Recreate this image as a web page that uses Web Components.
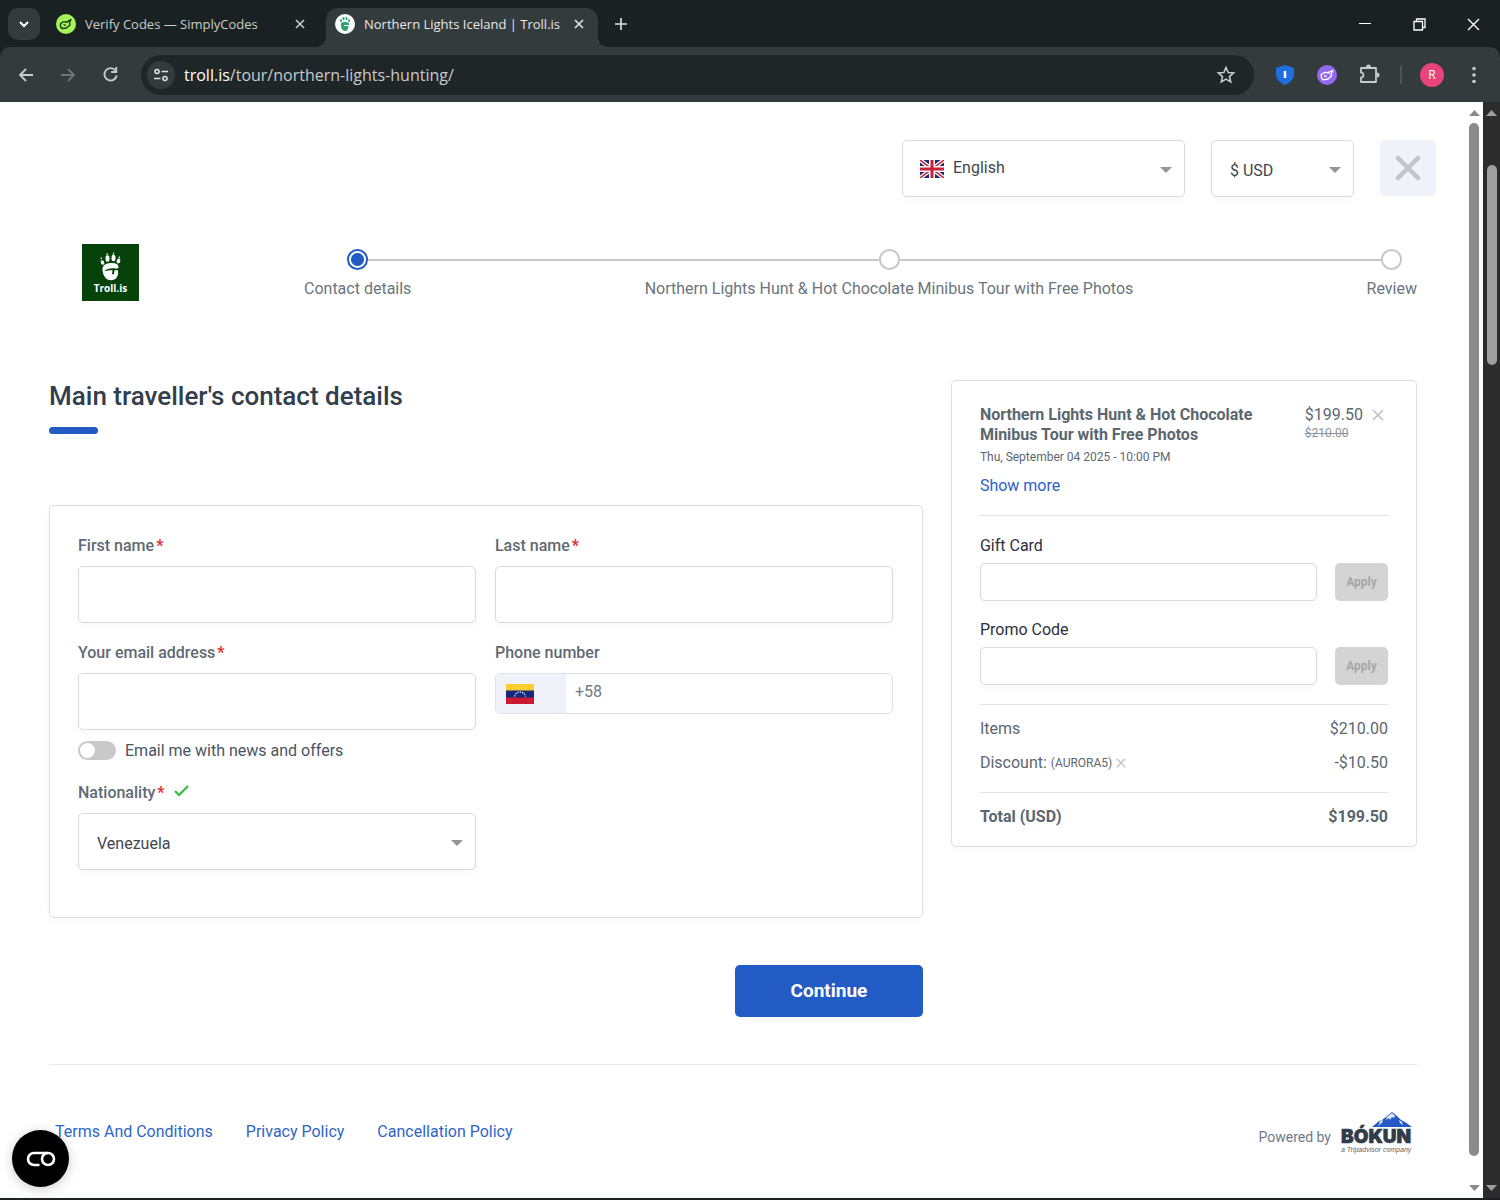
<!DOCTYPE html>
<html lang="en">
<head>
<meta charset="utf-8">
<title>Northern Lights Iceland | Troll.is</title>
<style>
  body {
    margin: 0;
    font-family: Roboto, "Liberation Sans", sans-serif;
    font-size: 16px;
    line-height: 20px;
    color: #5b6770;
    background: #000;
  }
</style>
</head>
<body>
<browser-window>
  <browser-tab slot="tabs" label="Verify Codes — SimplyCodes">
    <svg width="20" height="20" viewBox="0 0 20 20">
      <circle cx="10" cy="10" r="10" fill="#a6f45c"/>
      <path d="M4.500 9.500l3-1.700 3 .2 4.500-2.500-1.500 3 .5 2.500-3.500 3-4.500.500-1.500-2z M7.500 10.500l2.500 1 M10.500 8l2-.5" fill="none" stroke="#14300c" stroke-width="1.300" stroke-linejoin="round"/>
    </svg>
  </browser-tab>
  <browser-tab slot="tabs" label="Northern Lights Iceland | Troll.is" active>
    <svg width="20" height="20" viewBox="0 0 20 20">
      <circle cx="10" cy="10" r="10" fill="#fff"/>
      <g fill="#2ea36f">
        <ellipse cx="6" cy="6.500" rx="1" ry="1.500"/><ellipse cx="8.500" cy="4.500" rx="1" ry="1.800"/>
        <ellipse cx="11.500" cy="4.500" rx="1" ry="1.800"/><ellipse cx="14" cy="6.500" rx="1" ry="1.500"/>
        <path d="M6 9c2-1.500 6-1.500 8 0v2H9v1h4.500c0 3-1.500 5-3.500 5s-4-2.500-4-5z"/>
      </g>
    </svg>
  </browser-tab>

  <booking-page>
    <select-box slot="tools" class="language" label="Language" value="English">
      <svg slot="icon" width="24" height="18" viewBox="0 0 24 18">
        <path fill="#1d2a6b" d="M0 0h24v18H0z"/>
        <path d="M0 0l24 18M24 0L0 18" stroke="#fff" stroke-width="4"/>
        <path d="M0 0l24 18M24 0L0 18" stroke="#c8203c" stroke-width="1.500"/>
        <path d="M12 0v18M0 9h24" stroke="#fff" stroke-width="6"/>
        <path d="M12 0v18M0 9h24" stroke="#c8203c" stroke-width="3"/>
      </svg>
    </select-box>
    <select-box slot="tools" class="currency" label="Currency" value="$ USD"></select-box>

    <step-list slot="steps" current="0" steps="Contact details;Northern Lights Hunt &amp; Hot Chocolate Minibus Tour with Free Photos;Review"></step-list>

    <contact-form slot="form" heading="Main traveller's contact details">
      <text-field label="First name" required></text-field>
      <text-field label="Last name" required></text-field>
      <text-field label="Your email address" type="email" required></text-field>
      <phone-field label="Phone number" code="+58"></phone-field>
      <toggle-switch label="Email me with news and offers"></toggle-switch>
      <select-box label="Nationality" value="Venezuela" caption required valid></select-box>
    </contact-form>

    <cart-summary slot="cart">
      <span slot="title">Northern Lights Hunt &amp; Hot Chocolate Minibus Tour with Free Photos</span>
      <span slot="date">Thu, September 04 2025 - 10:00 PM</span>
      <code-field slot="codes" label="Gift Card"></code-field>
      <code-field slot="codes" label="Promo Code"></code-field>
    </cart-summary>

    <page-footer slot="footer">
      <a href="#terms">Terms And Conditions</a>
      <a href="#privacy">Privacy Policy</a>
      <a href="#cancellation">Cancellation Policy</a>
    </page-footer>
  </booking-page>

  <scroll-bar slot="bars" before="0" thumb="98" after="2"></scroll-bar>
  <scroll-bar slot="bars" before="4" thumb="19" after="77" dark></scroll-bar>
</browser-window>

<script>
const BASE = `
  :host, *, *::before, *::after { box-sizing: border-box; }
  svg { display: block; flex: none; }
  button { border: 0; padding: 0; background: none; font: inherit; color: inherit; cursor: pointer; }
  input, select { font: inherit; color: inherit; margin: 0; min-width: 0; }
  a { text-decoration: none; }
`;

class BaseElement extends HTMLElement {
  constructor() {
    super();
    this.attachShadow({ mode: 'open' });
  }

  connectedCallback() {
    this.shadowRoot.innerHTML = `<style>${BASE}${this.styles()}</style>${this.render()}`;
  }

  attr(name) {
    return (this.getAttribute(name) || '').replace(/&/g, '&amp;');
  }
}

// ---------- Browser ----------

class BrowserWindow extends BaseElement {
  styles() {
    return `
      :host {
        display: flex;
        flex-direction: column;
        min-height: 100vh;
        background: #1a2122;
        font-family: "Open Sans", "Noto Sans", sans-serif;
      }
      .strip { display: flex; height: 47px; padding: 8px 0 0 8px; color: #dfe3e3; }
      .strip button { display: grid; place-items: center; }
      .search { width: 32px; height: 32px; border-radius: 10px; background: #343b3d; }
      .tabs { display: flex; }
      .new { width: 46px; height: 32px; }
      .controls { display: flex; margin-left: auto; }
      .controls button { width: 54px; height: 32px; }
      .toolbar {
        display: flex;
        align-items: center;
        height: 55px;
        padding: 0 12px;
        border-radius: 10px 10px 0 0;
        background: #343b3d;
        color: #c7cbcb;
      }
      .toolbar button { display: grid; place-items: center; flex: none; }
      .nav { width: 28px; height: 28px; margin-right: 14px; }
      .reload { margin-right: 17px; }
      .address {
        flex: 1;
        display: flex;
        align-items: center;
        height: 40px;
        margin-right: 17px;
        padding: 0 18px 0 6px;
        border-radius: 20px;
        background: #1f2628;
      }
      .site { width: 28px; height: 28px; border-radius: 50%; background: #343b3d; margin-right: 9px; }
      .url { flex: 1; font-size: 16px; white-space: nowrap; }
      .url b { font-weight: 400; color: #fff; }
      .ext { width: 28px; height: 28px; margin-right: 14px; }
      .puzzle { margin-right: 17px; }
      .rule { width: 2px; height: 18px; margin-right: 18px; background: #4b5456; }
      .avatar { width: 24px; height: 24px; border-radius: 50%; background: #e8437a; color: #fff; font-size: 12px; margin-right: 16px; }
      .more { width: 28px; height: 28px; }
      .view { flex: 1; display: flex; margin-bottom: 2px; background: #fff; font-family: Roboto, "Liberation Sans", sans-serif; }
      .view slot:not([name])::slotted(*) { flex: 1; min-width: 0; }
    `;
  }

  render() {
    return `
      <div class="strip">
        <button class="search" aria-label="Search tabs">
          <svg width="12" height="8" viewBox="0 0 12 8"><path d="M2 2l4 4 4-4" fill="none" stroke="#fff" stroke-width="2"/></svg>
        </button>
        <div class="tabs"><slot name="tabs"></slot></div>
        <button class="new" aria-label="New tab">
          <svg width="14" height="14" viewBox="0 0 14 14"><path d="M7 1v12M1 7h12" stroke="currentColor" stroke-width="1.600"/></svg>
        </button>
        <div class="controls">
          <button aria-label="Minimize"><svg width="12" height="12" viewBox="0 0 12 12"><path d="M0 5.500h12" stroke="#fff"/></svg></button>
          <button aria-label="Restore">
            <svg width="13" height="13" viewBox="0 0 13 13"><path d="M1 3.500h8.500V12H1z M3.500 3.500V1H12v8.500H9.500" fill="none" stroke="#fff" stroke-width="1.300"/></svg>
          </button>
          <button aria-label="Close"><svg width="13" height="13" viewBox="0 0 13 13"><path d="M1 1l11 11M12 1L1 12" stroke="#fff" stroke-width="1.400"/></svg></button>
        </div>
      </div>
      <div class="toolbar">
        <button class="nav" aria-label="Back">
          <svg width="16" height="16" viewBox="0 0 16 16"><path d="M15 8H2M8 2L2 8l6 6" fill="none" stroke="currentColor" stroke-width="1.800"/></svg>
        </button>
        <button class="nav" aria-label="Forward">
          <svg width="16" height="16" viewBox="0 0 16 16"><path d="M1 8h13M8 2l6 6-6 6" fill="none" stroke="#6d7475" stroke-width="1.800"/></svg>
        </button>
        <button class="nav reload" aria-label="Reload">
          <svg width="17" height="17" viewBox="0 0 17 17"><path d="M13.500 4.500A6.200 6.200 0 1 0 14.700 9.500" fill="none" stroke="currentColor" stroke-width="1.900"/><path d="M14.200 1v5H9.200" fill="none" stroke="currentColor" stroke-width="1.900"/></svg>
        </button>
        <div class="address">
          <button class="site" aria-label="Site information">
            <svg width="16" height="16" viewBox="0 0 16 16" fill="none" stroke="#dfe3e3" stroke-width="1.600"><circle cx="4" cy="4.500" r="2"/><path d="M8.500 4.500H15M1 11.500h6.500"/><circle cx="12" cy="11.500" r="2"/></svg>
          </button>
          <span class="url"><b>troll.is</b>/tour/northern-lights-hunting/</span>
          <button aria-label="Bookmark">
            <svg width="20" height="20" viewBox="0 0 20 20"><path d="M10 2.500l2.200 5 5.400.5-4.100 3.600 1.200 5.300L10 14.100l-4.700 2.800 1.200-5.300L2.400 8l5.400-.5z" fill="none" stroke="currentColor" stroke-width="1.600"/></svg>
          </button>
        </div>
        <button class="ext" aria-label="Shield extension">
          <svg width="18" height="20" viewBox="0 0 18 20"><path d="M9 0l9 3v6c0 5-3.500 8.500-9 11-5.500-2.500-9-6-9-11V3z" fill="#1f6fe0"/><path d="M9 6v7" stroke="#fff" stroke-width="2.500"/></svg>
        </button>
        <button class="ext" aria-label="Coupon extension">
          <svg width="20" height="20" viewBox="0 0 20 20"><circle cx="10" cy="10" r="10" fill="#9468f0"/><path d="M4 9.500l3.500-2 3 .2 5.500-2.200-2 3.500.5 2-3.500 3-5 .8-1.500-2z M7 10.500l2.500 1.200 M10.500 8l2.500-.5" fill="none" stroke="#fff" stroke-width="1.300" stroke-linejoin="round"/></svg>
        </button>
        <button class="ext puzzle" aria-label="Extensions">
          <svg width="22" height="22" viewBox="0 0 22 22"><path d="M3 4h15v14H3v-4.500c3 0 3.500-5 0-5z" fill="none" stroke="currentColor" stroke-width="1.800" stroke-linejoin="round"/><path d="M8 3a2.500 2.500 0 0 1 5 0zM19 8.500a2.500 2.500 0 0 1 0 5z" fill="currentColor"/></svg>
        </button>
        <span class="rule"></span>
        <button class="avatar" aria-label="Profile">R</button>
        <button class="more" aria-label="Menu">
          <svg width="4" height="18" viewBox="0 0 4 18" fill="currentColor"><circle cx="2" cy="2.500" r="1.800"/><circle cx="2" cy="9" r="1.800"/><circle cx="2" cy="15.500" r="1.800"/></svg>
        </button>
      </div>
      <div class="view">
        <slot></slot>
        <slot name="bars"></slot>
      </div>
    `;
  }
}

class BrowserTab extends BaseElement {
  styles() {
    return `
      :host {
        display: flex;
        align-items: flex-start;
        position: relative;
        width: 276px;
        height: 39px;
        padding: 6px 6px 0 16px;
        font-size: 13px;
        color: #c9cdcd;
      }
      :host([active]) {
        width: 272px;
        margin-left: 10px;
        padding: 6px 9px 0;
        border-radius: 12px 12px 0 0;
        background: #343b3d;
        color: #e6e8e8;
      }
      /* the flared feet of the selected tab */
      :host([active])::before, :host([active])::after {
        content: "";
        position: absolute;
        bottom: 0;
        width: 10px;
        height: 10px;
      }
      :host([active])::before { left: -10px; background: radial-gradient(circle at 0 0, transparent 10px, #343b3d 10px); }
      :host([active])::after { right: -10px; background: radial-gradient(circle at 100% 0, transparent 10px, #343b3d 10px); }
      span { flex: 1; margin-left: 9px; white-space: nowrap; }
      button { display: grid; place-items: center; width: 20px; height: 20px; }
    `;
  }

  render() {
    return `
      <slot></slot><span>${this.attr('label')}</span>
      <button aria-label="Close tab"><svg width="10" height="10" viewBox="0 0 10 10"><path d="M1 1l8 8M9 1L1 9" stroke="currentColor" stroke-width="1.600"/></svg></button>
    `;
  }
}

class ScrollBar extends BaseElement {
  styles() {
    return `
      :host { display: flex; flex-direction: column; align-items: center; width: 15px; padding-right: 3px; color: #8b8b8b; }
      :host([dark]) { width: 17px; padding: 0; background: #2c2c2c; color: #9f9f9f; }
      .arrow { display: grid; place-items: center; height: 21px; }
      .thumb { width: 10px; border-radius: 5px; background: currentColor; }
    `;
  }

  render() {
    const part = (name, cls = '') => `<div class="${cls}" style="flex:${this.attr(name)}"></div>`;
    return `
      <div class="arrow"><svg width="11" height="6" viewBox="0 0 11 6"><path d="M0 6l5.500-6L11 6z" fill="currentColor"/></svg></div>
      ${part('before')}${part('thumb', 'thumb')}${part('after')}
      <div class="arrow"><svg width="11" height="6" viewBox="0 0 11 6"><path d="M0 0l5.500 6L11 0z" fill="currentColor"/></svg></div>
    `;
  }
}

// ---------- Booking page ----------

class BookingPage extends BaseElement {
  styles() {
    return `
      :host { display: block; padding: 38px 51px 0 49px; }
      .tools { display: flex; justify-content: flex-end; gap: 26px; margin-right: -19px; }
      slot[name=tools]::slotted(.language) { width: 283px; --pad: 0 0 2px 50px; }
      slot[name=tools]::slotted(.currency) { width: 143px; }
      .close { display: grid; place-items: center; width: 56px; height: 56px; border-radius: 5px; background: #eff3f9; }
      header { display: flex; align-items: flex-start; gap: 165px; margin-top: 47px; padding-left: 33px; }
      header slot::slotted(*) { flex: 1; }
      .columns {
        display: grid;
        grid-template-columns: minmax(0, 15fr) minmax(0, 8fr);
        align-items: start;
        gap: 28px;
        margin-top: 79px;
      }
      .consent {
        position: fixed;
        left: 12px;
        bottom: 13px;
        display: grid;
        place-items: center;
        width: 57px;
        height: 57px;
        border-radius: 50%;
        background: #000;
        box-shadow: 0 2px 12px #0003;
      }
    `;
  }

  render() {
    return `
      <div class="tools">
        <slot name="tools"></slot>
        <button class="close" aria-label="Close">
          <svg width="26" height="26" viewBox="0 0 26 26"><path d="M3 3l20 20M23 3L3 23" stroke="#c3c4c6" stroke-width="4.500" stroke-linecap="round"/></svg>
        </button>
      </div>
      <header>
        <svg width="57" height="57" viewBox="0 0 57 57" role="img">
          <path fill="#06430b" d="M0 0h57v57H0z"/>
          <g fill="#fff">
            <ellipse cx="20.500" cy="18.500" rx="1.700" ry="2.300" transform="rotate(-20 20.500 18.500)"/>
            <ellipse cx="25.500" cy="14.500" rx="2" ry="3.200"/>
            <ellipse cx="31.500" cy="14" rx="2" ry="3.200"/>
            <ellipse cx="36.500" cy="17" rx="1.800" ry="2.500" transform="rotate(20 36.500 17)"/>
            <path d="M19 12.500l1 2.500-1.500.3zM25 8.500l1 2.500h-1.700zM31.500 8l.8 2.500h-1.700zM37.500 11.500l.3 3-1.500-.4z"/>
            <path d="M20.500 25c0-4 4-6 9-6 4 0 7 1 7 4 0 2-2 1.500-4 1.300-4-.3-8 .2-10 3l5-1h3l-.5 4h2l.5-4h3.500c1 6-2 10-7 10s-8.500-5-8.500-11.300z"/>
          </g>
          <text x="28.500" y="48" text-anchor="middle" font-family="Open Sans, sans-serif" font-weight="700" font-size="10" fill="#fff">Troll.is</text>
        </svg>
        <slot name="steps"></slot>
      </header>
      <div class="columns">
        <slot name="form"></slot>
        <slot name="cart"></slot>
      </div>
      <slot name="footer"></slot>
      <button class="consent" aria-label="Cookie settings">
        <svg width="30" height="16" viewBox="0 0 30 16" fill="none" stroke="#fff" stroke-width="2.600"><path d="M13.500 14H8A6 6 0 0 1 8 2h14"/><circle cx="22" cy="8" r="6"/></svg>
      </button>
    `;
  }
}

class StepList extends BaseElement {
  styles() {
    return `
      :host { display: grid; padding-top: 5px; gap: 9px 0; color: #6b757d; }
      .marker { display: flex; align-items: center; grid-row: 1; }
      .marker::before, .marker::after, .line { content: ""; flex: 1; height: 2px; background: #c6c7c8; }
      .marker.first::before, .marker.last::after { background: none; }
      .line { grid-row: 1; align-self: center; }
      .dot { width: 21px; height: 21px; border: 2px solid #c6c7c8; border-radius: 50%; }
      .on .dot { border-color: #235bc4; background: radial-gradient(circle, #235bc4 6px, #fff 7px); }
      .label { grid-row: 2; white-space: nowrap; }
    `;
  }

  render() {
    const steps = this.getAttribute('steps').split(';');
    const current = Number(this.getAttribute('current'));
    this.style.gridTemplateColumns = steps.map(() => 'auto').join(' 1fr ');
    return steps.map((text, i) => {
      const col = i * 2 + 1;
      const cls = [i === 0 && 'first', i === steps.length - 1 && 'last', i === current && 'on'].filter(Boolean).join(' ');
      return `
        ${i ? `<div class="line" style="grid-column:${col - 1}"></div>` : ''}
        <div class="marker ${cls}" style="grid-column:${col}"><span class="dot"></span></div>
        <div class="label" style="grid-column:${col}">${text.replace('&', '&amp;')}</div>
      `;
    }).join('');
  }
}

class ContactForm extends BaseElement {
  styles() {
    return `
      :host { display: block; }
      h1 { margin: 0; font-size: 26px; line-height: 32px; font-weight: 500; color: #323e4b; }
      .bar { width: 49px; height: 7px; margin: 15px 0 71px; border-radius: 4px; background: #235bc4; }
      .card {
        display: grid;
        grid-template-columns: 1fr 1fr;
        gap: 0 19px;
        padding: 30px 29px 47px 28px;
        border: 1px solid #dcdddf;
        border-radius: 5px;
        box-shadow: 0 2px 10px #00000008;
      }
      ::slotted(*) { margin-bottom: 20px; }
      ::slotted(text-field[type=email]) { margin-bottom: 11px; }
      ::slotted(toggle-switch) { grid-column: 1 / -1; margin-bottom: 23px; }
      ::slotted(select-box) { margin-bottom: 0; }
      .submit {
        display: block;
        width: 188px;
        height: 52px;
        margin: 47px 0 0 auto;
        border-radius: 5px;
        background: #235bc4;
        color: #fff;
        font-size: 19px;
        font-weight: 700;
      }
    `;
  }

  render() {
    return `
      <h1>${this.attr('heading')}</h1>
      <div class="bar"></div>
      <div class="card"><slot></slot></div>
      <button class="submit">Continue</button>
    `;
  }
}

const LABEL = `
  label { display: flex; align-items: center; height: 20px; margin-bottom: 10px; font-weight: 500; color: #5f6a74; }
  label i { margin-left: 2px; font-style: normal; font-weight: 700; color: #e62e2e; }
  label svg { margin: 0 0 4px 9px; }
`;

const BOX = `
  border: 1px solid #d8dadc;
  border-radius: 5px;
  background: #fff;
  box-shadow: 0 3px 8px #00000008;
`;

class TextField extends BaseElement {
  styles() {
    return `
      :host { display: block; }
      ${LABEL}
      input { display: block; width: 100%; height: 57px; padding: 0 18px; ${BOX} }
    `;
  }

  render() {
    return `
      <label for="f">${this.attr('label')}${this.hasAttribute('required') ? '<i>*</i>' : ''}</label>
      <input id="f" type="${this.attr('type') || 'text'}">
    `;
  }
}

class PhoneField extends BaseElement {
  styles() {
    return `
      :host { display: block; }
      ${LABEL}
      .row { display: flex; height: 41px; overflow: hidden; border: 1px solid #dde1ea; border-radius: 5px; }
      button { width: 70px; padding-left: 10px; background: #eff2f9; }
      input { flex: 1; padding: 0 9px 3px; border: 0; background: none; }
      input::placeholder { color: #6f7b8a; opacity: 1; }
    `;
  }

  render() {
    return `
      <label for="f">${this.attr('label')}</label>
      <div class="row">
        <button aria-label="Country code">
          <svg width="28" height="20" viewBox="0 0 28 20">
            <path fill="#fdce30" d="M0 0h28v7H0z"/><path fill="#12277d" d="M0 6.500h28V14H0z"/><path fill="#cc1a33" d="M0 13.500h28V20H0z"/>
            <path d="M8.500 12.500C10 6.500 18 6.500 19.500 12.500" fill="none" stroke="#fff" stroke-width="1.200" stroke-dasharray="1.300 1.100"/>
          </svg>
        </button>
        <input id="f" type="tel" placeholder="${this.attr('code')}">
      </div>
    `;
  }
}

class ToggleSwitch extends BaseElement {
  styles() {
    return `
      :host { display: block; }
      label { display: flex; align-items: center; gap: 9px; height: 19px; color: #4a5562; }
      input { appearance: none; width: 38px; height: 19px; padding: 2px; border-radius: 10px; background: #c9c9c9; }
      input::before { content: ""; display: block; width: 15px; height: 15px; border-radius: 50%; background: #fff; }
      input:checked { background: #235bc4; }
      input:checked::before { margin-left: auto; }
    `;
  }

  render() {
    return `<label><input type="checkbox" role="switch">${this.attr('label')}</label>`;
  }
}

class SelectBox extends BaseElement {
  styles() {
    return `
      :host { display: block; }
      ${LABEL}
      .box { display: grid; align-items: center; height: 57px; ${BOX} }
      .box > *, ::slotted(svg) { grid-area: 1 / 1; }
      select {
        appearance: none;
        width: 100%;
        height: 100%;
        padding: var(--pad, 4px 0 0 18px);
        border: 0;
        background: none;
        color: #3f464d;
      }
      ::slotted(svg) { margin-left: 17px; pointer-events: none; }
      .caret { justify-self: end; margin-right: 12px; margin-top: 2px; pointer-events: none; }
    `;
  }

  render() {
    const caption = this.hasAttribute('caption') ? `
      <label for="s">${this.attr('label')}${this.hasAttribute('required') ? '<i>*</i>' : ''}
        ${this.hasAttribute('valid') ? '<svg width="15" height="12" viewBox="0 0 15 12"><path d="M1 6l4 4 9-9" fill="none" stroke="#2fbf3a" stroke-width="2.200"/></svg>' : ''}
      </label>` : '';
    return `
      ${caption}
      <div class="box">
        <select id="s" aria-label="${this.attr('label')}"><option>${this.attr('value')}</option></select>
        <slot name="icon"></slot>
        <svg class="caret" width="12" height="6" viewBox="0 0 12 6"><path d="M0 0h12L6 6z" fill="#959595"/></svg>
      </div>
    `;
  }
}

// ---------- Cart ----------

const CROSS = size => `<svg width="${size}" height="${size}" viewBox="0 0 12 12"><path d="M1 1l10 10M11 1L1 11" stroke="#bfc1c3" stroke-width="1.600"/></svg>`;

class CartSummary extends BaseElement {
  styles() {
    return `
      :host {
        display: block;
        padding: 24px 28px 19px;
        border: 1px solid #dcdddf;
        border-radius: 5px;
        box-shadow: 0 2px 10px #00000008;
      }
      .item { display: flex; justify-content: space-between; gap: 20px; }
      h2 { margin: 0; max-width: 290px; font-size: 16px; line-height: 20px; font-weight: 700; }
      .price { flex: none; display: flex; align-items: center; gap: 9px; margin-right: 4px; }
      del { display: block; font-size: 12px; line-height: 16px; color: #8b949a; }
      .date { font-size: 12px; line-height: 16px; margin-top: 4px; }
      a { display: inline-block; margin-top: 11px; color: #2b62c9; }
      .codes { display: grid; gap: 19px; padding: 20px 0 19px; margin-top: 19px; border: solid #e1e2e4; border-width: 1px 0; }
      dl { margin: 0; }
      dl div { display: flex; justify-content: space-between; }
      dl div + div { margin-top: 14px; }
      dt { display: flex; align-items: center; gap: 4px; }
      dt small { font-size: 12px; }
      dd { margin: 0; }
      .sums { padding: 14px 0 19px; border-bottom: 1px solid #e1e2e4; }
      .total { padding-top: 14px; font-weight: 700; }
    `;
  }

  render() {
    return `
      <div class="item">
        <h2><slot name="title"></slot></h2>
        <div>
          <div class="price">$199.50 <button aria-label="Remove item">${CROSS(12)}</button></div>
          <del>$210.00</del>
        </div>
      </div>
      <div class="date"><slot name="date"></slot></div>
      <a href="#more">Show more</a>
      <div class="codes"><slot name="codes"></slot></div>
      <dl class="sums">
        <div><dt>Items</dt><dd>$210.00</dd></div>
        <div><dt>Discount: <small>(AURORA5)</small> <button aria-label="Remove discount">${CROSS(10)}</button></dt><dd>-$10.50</dd></div>
      </dl>
      <dl class="total">
        <div><dt>Total (USD)</dt><dd>$199.50</dd></div>
      </dl>
    `;
  }
}

class CodeField extends BaseElement {
  styles() {
    return `
      :host { display: block; }
      label { display: block; margin-bottom: 7px; color: #2c3040; }
      .row { display: flex; gap: 18px; }
      input { flex: 1; height: 38px; padding: 0 12px; ${BOX} }
      button { width: 53px; height: 38px; border-radius: 5px; background: #d4d4d4; color: #a6a6a6; font-size: 12px; font-weight: 700; }
    `;
  }

  render() {
    return `
      <label for="c">${this.attr('label')}</label>
      <div class="row"><input id="c" type="text"><button disabled>Apply</button></div>
    `;
  }
}

// ---------- Footer ----------

class PageFooter extends BaseElement {
  styles() {
    return `
      :host {
        display: flex;
        justify-content: space-between;
        align-items: center;
        margin-top: 47px;
        padding: 47px 4px 43px 6px;
        border-top: 1px solid #e9eaec;
      }
      nav { display: flex; gap: 33px; padding-bottom: 3px; }
      ::slotted(a) { color: #2f65c8; text-decoration: none; }
      .powered { display: flex; align-items: center; gap: 10px; font-size: 14px; color: #6b7a8a; }
      .powered span { padding-top: 8px; }
    `;
  }

  render() {
    return `
      <nav><slot></slot></nav>
      <div class="powered">
        <span>Powered by</span>
        <svg width="72" height="42" viewBox="0 0 72 42" role="img">
          <path d="M31 15l7-6 3-1 4-3 6-5 5 4 4 4 4 2 7 5z" fill="#2459c6"/>
          <path d="M39 9l3-1-1 3-2 1-2 3zM46 5l5-4 3 3-1 2-2-1-2 3-1-2-3 2zM58 8l3 2 1 3-3-2z" fill="#dfe8fa"/>
          <text x="0" y="31" font-family="Inter, sans-serif" font-weight="900" font-size="19" fill="#303c49" stroke="#303c49" stroke-width="0.600">BÓKUN</text>
          <text x="0" y="40" font-family="Liberation Sans, sans-serif" font-style="italic" font-size="7" fill="#5d6469">a Tripadvisor company</text>
        </svg>
      </div>
    `;
  }
}

customElements.define('browser-window', BrowserWindow);
customElements.define('browser-tab', BrowserTab);
customElements.define('scroll-bar', ScrollBar);
customElements.define('booking-page', BookingPage);
customElements.define('step-list', StepList);
customElements.define('contact-form', ContactForm);
customElements.define('text-field', TextField);
customElements.define('phone-field', PhoneField);
customElements.define('toggle-switch', ToggleSwitch);
customElements.define('select-box', SelectBox);
customElements.define('cart-summary', CartSummary);
customElements.define('code-field', CodeField);
customElements.define('page-footer', PageFooter);
</script>
</body>
</html>
